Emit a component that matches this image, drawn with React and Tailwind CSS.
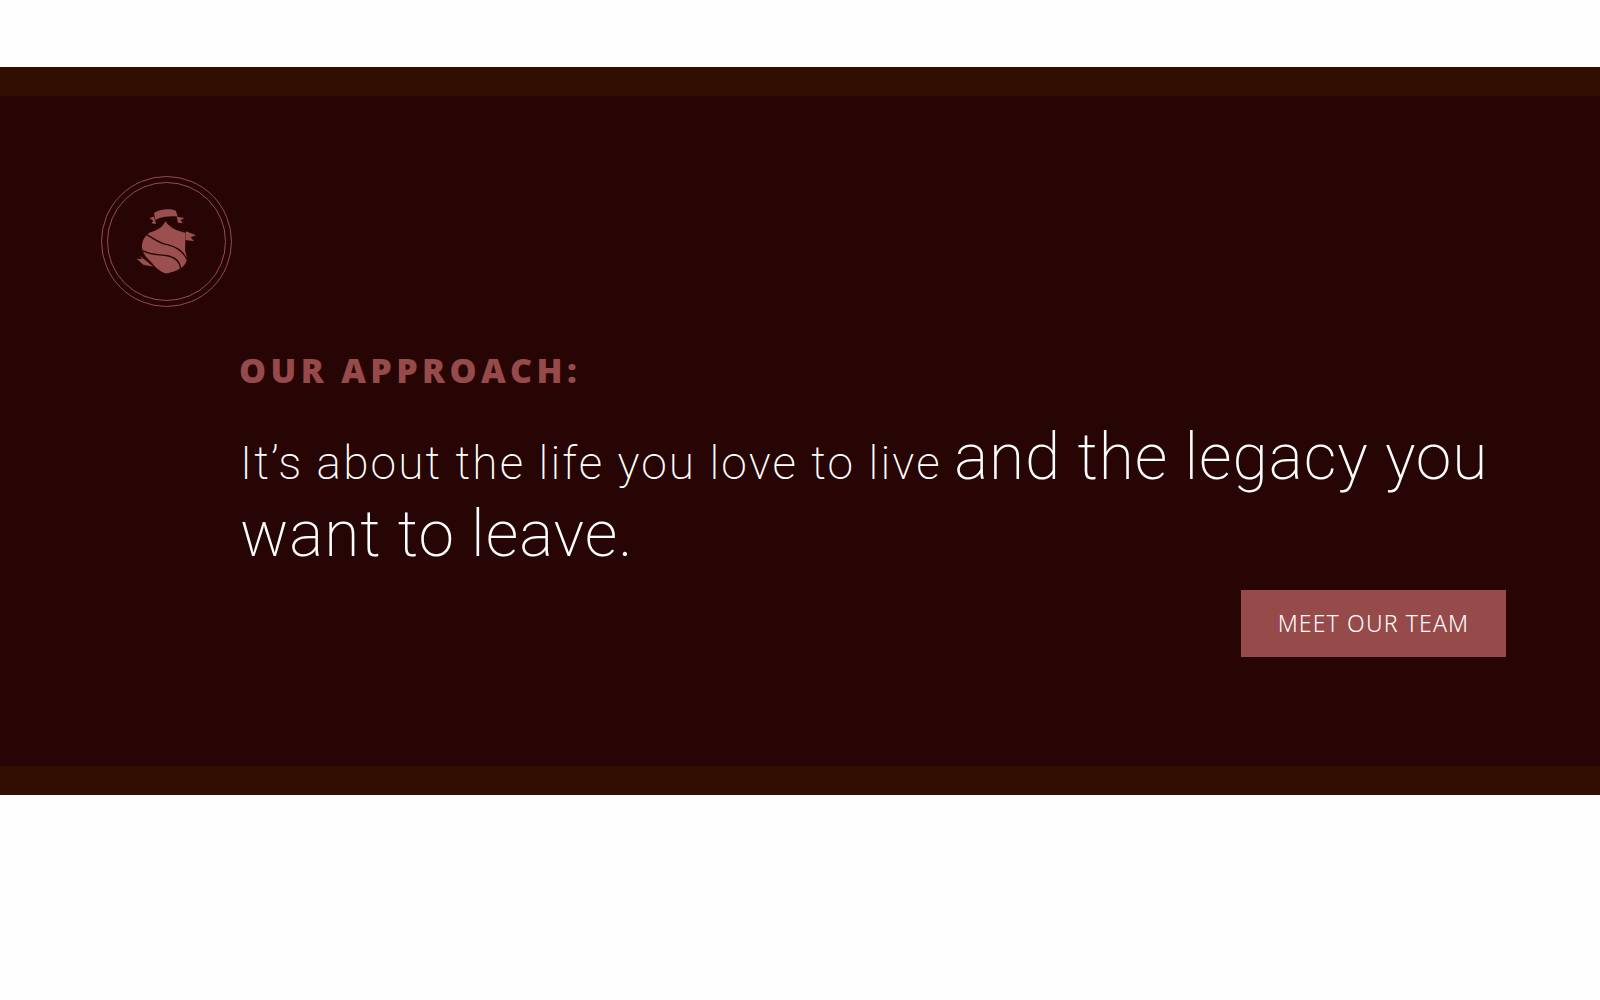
import React from "react";

function Crest() {
  return (
    <svg viewBox="0 0 210 240" className="w-[70px] h-[80px]" fill="#9c4f4f">
      <path d="M72 40 C85 28 125 24 138 33 L143 50 C125 47 95 49 76 60 Z" />
      <path d="M58 54 L72 50 L78 72 L64 70 L70 62 Z" />
      <path d="M140 50 L164 54 L152 60 L158 70 L144 68 Z" />
      <path d="M106 64 C100 80 82 92 58 98 C42 110 35 126 36 142 C38 168 58 178 70 194 C84 210 100 220 110 220 C130 216 170 204 170 176 C170 166 167 158 165 150 L167 98 C140 94 118 82 106 64 Z" />
      <path d="M50 104 C76 118 84 128 112 134 C140 141 160 152 170 178" fill="none" stroke="#280505" strokeWidth="4" />
      <path d="M38 152 C66 168 90 162 115 168 C140 174 152 188 152 212" fill="none" stroke="#280505" strokeWidth="4" />
      <path d="M168 94 L198 106 L182 112 L192 124 L167 120 Z" />
      <path d="M30 168 L50 184 L70 200 L40 194 L20 176 L36 178 Z" />
    </svg>
  );
}

export default function App() {
  return (
    <div className="min-h-[1000px] bg-[#fefefe] pt-[67px]">
      <section className="bg-[#280505]">
        <div className="h-[29px] bg-[#320d01]" />
        <div className="h-[670px] pt-[80px] flex flex-col">
          <div className="ml-[101px] w-[131px] h-[131px] rounded-full border border-[#954c4c] flex items-center justify-center">
            <div className="w-[119px] h-[119px] rounded-full border border-[#954c4c] flex items-center justify-center pb-[4px] pr-[3px]">
              <Crest />
            </div>
          </div>
          <div className="ml-[239px] mt-[40px]">
            <h2 className="font-['Open_Sans',sans-serif] font-extrabold text-[34px] leading-[46px] tracking-[4.4px] text-[#964a4a]">
              OUR APPROACH:
            </h2>
            <p className="mt-[29px] ml-[1px] font-['Roboto',sans-serif] font-extralight text-white text-[64px] leading-[71px] tracking-[0.9px]">
              <span className="text-[46px] tracking-[2.13px] mr-[-4px]">It’s about the life you love to live</span>{" "}
              and the legacy you
              <br />
              want to leave.
            </p>
          </div>
          <a className="self-end mr-[94px] mt-[20px] w-[265px] h-[67px] bg-[#964a4a] flex items-center justify-center font-['Noto_Sans',sans-serif] font-light text-white text-[23px] tracking-[1.15px]">
            MEET OUR TEAM
          </a>
        </div>
        <div className="h-[29px] bg-[#320d01]" />
      </section>
    </div>
  );
}
